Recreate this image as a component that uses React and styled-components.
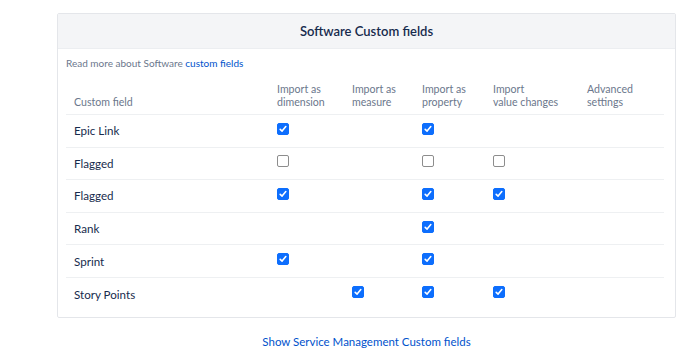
import React from 'react';
import styled, { createGlobalStyle } from 'styled-components';

const GlobalStyle = createGlobalStyle`
  body {
    margin: 0;
    background: #fff;
    font-family: Lato, "Noto Sans", sans-serif;
  }
`;

const Page = styled.div`
  width: 619px;
  padding: 13px 0 0 57px;
`;

const Card = styled.section`
  border: 1px solid #e4e6ea;
  border-radius: 2px;
`;

const CardHeader = styled.h2`
  margin: 0;
  height: 34px;
  background: #f4f5f7;
  border-bottom: 1px solid #eceef1;
  display: flex;
  align-items: center;
  justify-content: center;
  font-size: 13px;
  font-weight: 600;
  color: #172b4d;
`;

const CardBody = styled.div`
  padding: 7px 11px 7px 8px;
`;

const Intro = styled.p`
  margin: 0 0 13px;
  font-size: 10px;
  line-height: 14px;
  color: #6b778c;
`;

const Link = styled.a`
  color: #0052cc;
  text-decoration: none;
`;

const Table = styled.table`
  width: 598px;
  border-collapse: collapse;
  table-layout: fixed;
`;

const Th = styled.th`
  box-sizing: border-box;
  width: ${p => p.$w}px;
  padding: 0 8px 5px;
  text-align: left;
  vertical-align: bottom;
  font-size: 10.6px;
  font-weight: 400;
  line-height: 13px;
  color: #6b778c;
  border-bottom: 1px solid #eef0f2;
`;

const Row = styled.tr`
  height: 32.6px;
  border-bottom: ${p => (p.$last ? 'none' : '1px solid #eef0f2')};
`;

const Td = styled.td`
  padding: 0 8px;
  font-size: 11.6px;
  color: #172b4d;
  vertical-align: middle;
`;

const Box = styled.span`
  width: 12px;
  height: 12px;
  margin-top: -4px;
  box-sizing: border-box;
  border-radius: 2px;
  background: ${p => (p.$on ? '#0d6efd' : '#fff')};
  border: 1px solid ${p => (p.$on ? '#0d6efd' : '#8d8d8d')};
  display: flex;
  align-items: center;
  justify-content: center;
`;

const Check = ({ on }) => (
  <Box $on={on}>
    {on && (
      <svg width="8" height="8" viewBox="0 0 8 8">
        <path d="M1.2 4.3 L3.1 6.1 L6.8 1.6" fill="none" stroke="#fff" strokeWidth="1.6" strokeLinecap="round" strokeLinejoin="round" />
      </svg>
    )}
  </Box>
);

const Footer = styled.div`
  margin-top: 17px;
  text-align: center;
  font-size: 11.5px;
`;

const cols = [
  { label: 'Custom field', w: 203 },
  { label: ['Import as', 'dimension'], w: 75 },
  { label: ['Import as', 'measure'], w: 70 },
  { label: ['Import as', 'property'], w: 71 },
  { label: ['Import', 'value changes'], w: 94 },
  { label: ['Advanced', 'settings'], w: 85 },
];

// null = no checkbox, true/false = checked state
const rows = [
  ['Epic Link', true, null, true, null],
  ['Flagged', false, null, false, false],
  ['Flagged', true, null, true, true],
  ['Rank', null, null, true, null],
  ['Sprint', true, null, true, null],
  ['Story Points', null, true, true, true],
];

export default function App() {
  return (
    <Page>
      <GlobalStyle />
      <Card>
        <CardHeader>Software Custom fields</CardHeader>
        <CardBody>
          <Intro>
            Read more about Software <Link href="#">custom fields</Link>
          </Intro>
          <Table>
            <thead>
              <tr>
                {cols.map((c, i) => (
                  <Th key={i} $w={c.w}>
                    {Array.isArray(c.label) ? (
                      <>
                        {c.label[0]}
                        <br />
                        {c.label[1]}
                      </>
                    ) : (
                      c.label
                    )}
                  </Th>
                ))}
              </tr>
            </thead>
            <tbody>
              {rows.map((r, i) => (
                <Row key={i} $last={i === rows.length - 1}>
                  <Td>{r[0]}</Td>
                  {r.slice(1).map((v, j) => (
                    <Td key={j}>{v !== null && <Check on={v} />}</Td>
                  ))}
                  <Td />
                </Row>
              ))}
            </tbody>
          </Table>
        </CardBody>
      </Card>
      <Footer>
        <Link href="#">Show Service Management Custom fields</Link>
      </Footer>
    </Page>
  );
}
